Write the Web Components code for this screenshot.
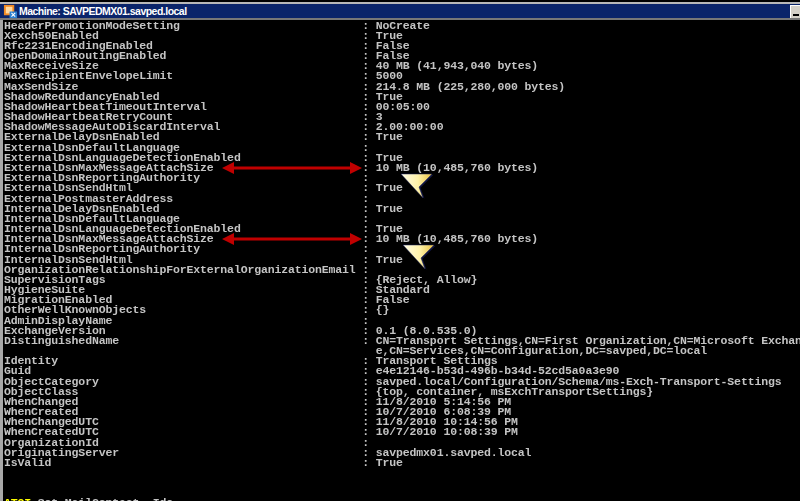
<!DOCTYPE html>
<html>
<head>
<meta charset="utf-8">
<title>Machine: SAVPEDMX01.savped.local</title>
<style>
html, body { margin:0; padding:0; background:#000; }
</style>
</head>
<body>
<console-window title-text="Machine: SAVPEDMX01.savped.local"></console-window>

<script>
/* the shell output, [name, value] */
var rows = [
	['HeaderPromotionModeSetting', 'NoCreate'],
	['Xexch50Enabled', 'True'],
	['Rfc2231EncodingEnabled', 'False'],
	['OpenDomainRoutingEnabled', 'False'],
	['MaxReceiveSize', '40 MB (41,943,040 bytes)'],
	['MaxRecipientEnvelopeLimit', '5000'],
	['MaxSendSize', '214.8 MB (225,280,000 bytes)'],
	['ShadowRedundancyEnabled', 'True'],
	['ShadowHeartbeatTimeoutInterval', '00:05:00'],
	['ShadowHeartbeatRetryCount', '3'],
	['ShadowMessageAutoDiscardInterval', '2.00:00:00'],
	['ExternalDelayDsnEnabled', 'True'],
	['ExternalDsnDefaultLanguage', ''],
	['ExternalDsnLanguageDetectionEnabled', 'True'],
	['ExternalDsnMaxMessageAttachSize', '10 MB (10,485,760 bytes)'],
	['ExternalDsnReportingAuthority', ''],
	['ExternalDsnSendHtml', 'True'],
	['ExternalPostmasterAddress', ''],
	['InternalDelayDsnEnabled', 'True'],
	['InternalDsnDefaultLanguage', ''],
	['InternalDsnLanguageDetectionEnabled', 'True'],
	['InternalDsnMaxMessageAttachSize', '10 MB (10,485,760 bytes)'],
	['InternalDsnReportingAuthority', ''],
	['InternalDsnSendHtml', 'True'],
	['OrganizationRelationshipForExternalOrganizationEmail', ''],
	['SupervisionTags', '{Reject, Allow}'],
	['HygieneSuite', 'Standard'],
	['MigrationEnabled', 'False'],
	['OtherWellKnownObjects', '{}'],
	['AdminDisplayName', ''],
	['ExchangeVersion', '0.1 (8.0.535.0)'],
	['DistinguishedName', 'CN=Transport Settings,CN=First Organization,CN=Microsoft Exchang'],
	['', 'e,CN=Services,CN=Configuration,DC=savped,DC=local'],
	['Identity', 'Transport Settings'],
	['Guid', 'e4e12146-b53d-496b-b34d-52cd5a0a3e90'],
	['ObjectCategory', 'savped.local/Configuration/Schema/ms-Exch-Transport-Settings'],
	['ObjectClass', '{top, container, msExchTransportSettings}'],
	['WhenChanged', '11/8/2010 5:14:56 PM'],
	['WhenCreated', '10/7/2010 6:08:39 PM'],
	['WhenChangedUTC', '11/8/2010 10:14:56 PM'],
	['WhenCreatedUTC', '10/7/2010 10:08:39 PM'],
	['OrganizationId', ''],
	['OriginatingServer', 'savpedmx01.savped.local'],
	['IsValid', 'True'],
];

class ConsoleRow extends HTMLElement {
	constructor() {
		super();
		this.attachShadow({mode:'open'});
	}
	connectedCallback() {
		let cont = !this.getAttribute('name');
		this.shadowRoot.innerHTML = `
		<style>
			:host { display:grid; grid-template-columns:calc(53 * 6.76px) calc(2 * 6.76px) 1fr; height:10.186px; white-space:pre; }
			span { line-height:10.186px; display:block; }
		</style>
		<span>${this.getAttribute('name') || ''}</span><span>${cont ? '' : ':'}</span><span>${this.getAttribute('value') || ''}</span>
		`;
	}
}
customElements.define('console-row', ConsoleRow);

class RedArrow extends HTMLElement {
	constructor() {
		super();
		let shadowRoot = this.attachShadow({mode:'open'});
		shadowRoot.innerHTML = `
		<style>
			:host { position:absolute; display:block; width:140px; height:14px; }
			svg { display:block; }
		</style>
		<svg viewBox="0 0 140 14" width="140" height="14"><path fill="#c00000" d="M0 7 12 1V5.5H128V1L140 7 128 13V8.5H12V13Z"/></svg>
		`;
	}
}
customElements.define('red-arrow', RedArrow);

class PointerMark extends HTMLElement {
	constructor() {
		super();
		let shadowRoot = this.attachShadow({mode:'open'});
		shadowRoot.innerHTML = `
		<style>
			:host { position:absolute; display:block; width:34px; height:28px; }
			svg { display:block; overflow:visible; }
		</style>
		<svg viewBox="0 0 34 28" width="34" height="28">
			<defs><linearGradient id="g" x1="0" y1="0" x2="1" y2="0">
				<stop offset="0" stop-color="#fffde8"/><stop offset=".55" stop-color="#fff2a8"/><stop offset="1" stop-color="#e8c040"/>
			</linearGradient></defs>
			<path fill="#141a4a" d="M1 1 32 1 19 14 23 25Z" transform="translate(1.5 .8)" opacity=".85"/>
			<path fill="url(#g)" stroke="#1a2060" stroke-width=".5" d="M1 1 32 1 19 14 23 25Z"/>
		</svg>
		`;
	}
}
customElements.define('pointer-mark', PointerMark);

class ConsoleWindow extends HTMLElement {
	constructor() {
		super();
		let shadowRoot = this.attachShadow({mode:'open'});
		shadowRoot.innerHTML = `
		<style>
			:host { display:flex; flex-direction:column; position:relative; width:800px; height:501px; overflow:hidden; background:#000; }
			.bar { flex:none; height:14px; margin-top:2px; border-top:2px solid #b8b8b8; border-bottom:2px solid #777; background:#0a246a; display:flex; align-items:center; gap:1px; padding-left:3px; color:#fff; font:bold 10.5px/14px "Liberation Sans", sans-serif; letter-spacing:-.52px; }
			.bar svg { flex:none; }
			.bar .t { flex:1 1 auto; }
			.min { flex:none; width:10px; height:13px; background:#d4d0c8; position:relative; border-top:1px solid #fff; border-left:1px solid #fff; box-sizing:border-box; }
			.min::after { content:''; position:absolute; left:2px; bottom:2px; width:6px; height:2px; background:#000; }
			.body { flex:1 1 auto; border-left:3px solid #a8a8a8; padding:.6px 0 0 1px; overflow:hidden; color:#c4c4c4; font:bold 11.5px "Liberation Mono", monospace; letter-spacing:-.14px; filter:blur(.25px); }
			.last { color:#ffff00; height:10px; line-height:10px; margin-top:30px; white-space:pre; }
			.last span { color:#c4c4c4; }
			red-arrow.a { left:222px; top:161px; }
			red-arrow.b { left:222px; top:232px; }
			pointer-mark.a { left:400px; top:173px; }
			pointer-mark.b { left:402px; top:244px; }
		</style>
		<div class="bar">
			<svg viewBox="0 0 16 16" width="15" height="15"><rect x="1" y="1" width="11" height="11" fill="#f08a24"/><rect x="3" y="3" width="7" height="7" fill="#ffd9a0"/><rect x="7" y="8" width="8" height="7" fill="#2a7fd0"/><path d="M9 9.5l4 4M13 9.5l-4 4" stroke="#fff" stroke-width="1.2"/></svg>
			<span class="t"></span>
			<span class="min"></span>
		</div>
		<div class="body"><slot></slot></div>
		<red-arrow class="a"></red-arrow>
		<red-arrow class="b"></red-arrow>
		<pointer-mark class="a"></pointer-mark>
		<pointer-mark class="b"></pointer-mark>
		`;
		shadowRoot.querySelector('.t').textContent = this.getAttribute('title-text');
		let body = shadowRoot.querySelector('.body');
		for (let r of rows) {
			let row = document.createElement('console-row');
			if (r[0]) row.setAttribute('name', r[0]);
			row.setAttribute('value', r[1]);
			body.appendChild(row);
		}
		let last = document.createElement('div');
		last.className = 'last';
		last.innerHTML = 'ATOI<span> Set-MailContact -Ide</span>';
		body.appendChild(last);
	}
}
customElements.define('console-window', ConsoleWindow);
</script>
</body>
</html>
